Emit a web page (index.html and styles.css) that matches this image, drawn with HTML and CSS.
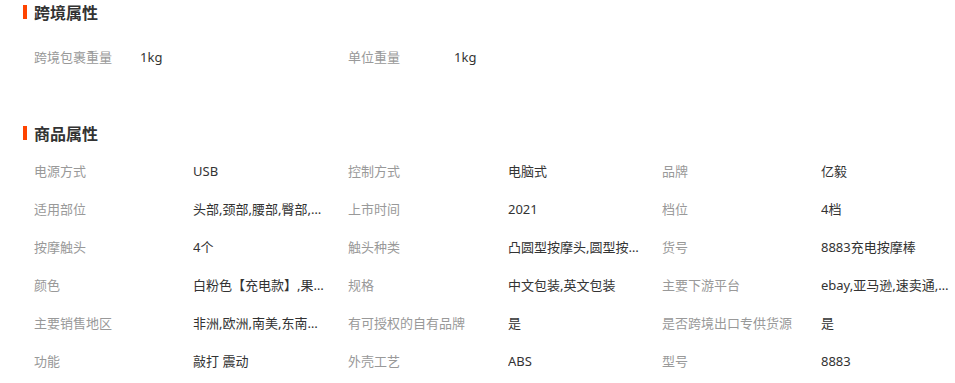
FILE: index.html
```html
<!DOCTYPE html>
<html lang="zh-CN">
<head>
<meta charset="utf-8">
<title>属性</title>
<link rel="stylesheet" href="styles.css">
</head>
<body>
<div class="page">
  <div class="section">
    <div class="title"><span class="bar"></span><span class="title-text">跨境属性</span></div>
    <div class="grid grid-cb">
      <div class="label">跨境包裹重量</div><div class="value">1kg</div>
      <div class="label">单位重量</div><div class="value">1kg</div>
    </div>
  </div>
  <div class="section section-2">
    <div class="title"><span class="bar"></span><span class="title-text">商品属性</span></div>
    <div class="grid grid-attr">
      <div class="label">电源方式</div><div class="value">USB</div>
      <div class="label">控制方式</div><div class="value">电脑式</div>
      <div class="label">品牌</div><div class="value">亿毅</div>

      <div class="label">适用部位</div><div class="value">头部,颈部,腰部,臀部,腿部,足部</div>
      <div class="label">上市时间</div><div class="value">2021</div>
      <div class="label">档位</div><div class="value">4档</div>

      <div class="label">按摩触头</div><div class="value">4个</div>
      <div class="label">触头种类</div><div class="value">凸圆型按摩头,圆型按摩头</div>
      <div class="label">货号</div><div class="value">8883充电按摩棒</div>

      <div class="label">颜色</div><div class="value">白粉色【充电款】,果绿色【充电款】</div>
      <div class="label">规格</div><div class="value">中文包装,英文包装</div>
      <div class="label">主要下游平台</div><div class="value">ebay,亚马逊,速卖通,wish</div>

      <div class="label">主要销售地区</div><div class="value">非洲,欧洲,南美,东南亚,北美</div>
      <div class="label">有可授权的自有品牌</div><div class="value">是</div>
      <div class="label">是否跨境出口专供货源</div><div class="value">是</div>

      <div class="label">功能</div><div class="value">敲打 震动</div>
      <div class="label">外壳工艺</div><div class="value">ABS</div>
      <div class="label">型号</div><div class="value">8883</div>
    </div>
  </div>
</div>
</body>
</html>
```
FILE: styles.css
```css
html, body {
  margin: 0;
  padding: 0;
  background: #fff;
}
body {
  font-family: "Noto Sans", "Noto Sans CJK SC", sans-serif;
  font-size: 13px;
  color: #333;
}
.page {
  padding-left: 23px;
}
.title {
  display: flex;
  align-items: center;
  height: 24px;
}
.bar {
  width: 4px;
  height: 14px;
  background: #ff4400;
  margin-right: 7px;
}
.title-text {
  font-family: "Noto Sans CJK SC", sans-serif;
  font-size: 16px;
  font-weight: bold;
  color: #333;
  line-height: 24px;
}
.grid {
  display: grid;
  padding-left: 11px;
}
.grid-cb {
  grid-template-columns: 106px 208px 106px 208px;
  grid-auto-rows: 38px;
  margin-top: 14px;
}
.section-2 {
  margin-top: 45px;
}
.grid-attr {
  grid-template-columns: 159px 155px 160px 154px 159px 134px;
  grid-auto-rows: 38px;
  margin-top: 7px;
}
.label, .value {
  line-height: 38px;
  white-space: nowrap;
}
.label {
  color: #999;
}
.value {
  color: #333;
  overflow: hidden;
  text-overflow: ellipsis;
  max-width: 134px;
}
```
